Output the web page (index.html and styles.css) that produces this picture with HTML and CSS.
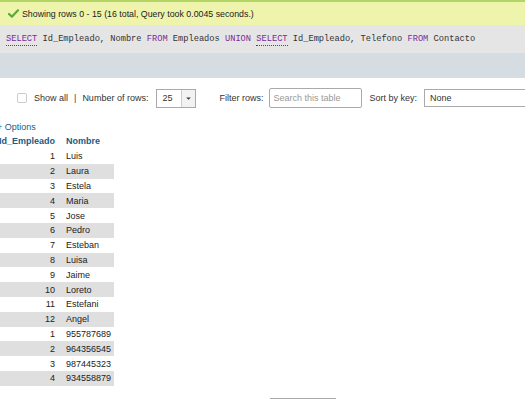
FILE: index.html
```html
<!DOCTYPE html>
<html>
<head>
<meta charset="utf-8">
<link rel="stylesheet" href="styles.css">
</head>
<body>
<div class="msg">
  <svg class="check" width="11" height="9" viewBox="0 0 12 10"><path d="M1 5.5 L4.2 8.5 L11 1.5" fill="none" stroke="#5aa83a" stroke-width="2.4" stroke-linecap="round" stroke-linejoin="round"/></svg>
  <span>Showing rows 0 - 15 (16 total, Query took 0.0045 seconds.)</span>
</div>
<div class="sql"><span class="kw u">SELECT</span> Id_Empleado, Nombre <span class="kw">FROM</span> Empleados <span class="kw">UNION</span> <span class="kw u">SELECT</span> Id_Empleado, Telefono <span class="kw">FROM</span> Contacto</div>
<div class="toolbar"></div>
<div class="controls">
  <span class="cb"></span>
  <span class="lbl">Show all</span>
  <span class="sep">|</span>
  <span class="lbl">Number of rows:</span>
  <span class="sel"><span class="selv">25</span><span class="arrow"><svg width="5" height="3" viewBox="0 0 6 4"><path d="M0 0.5 L6 0.5 L3 3.5 Z" fill="#333"/></svg></span></span>
  <span class="lbl filter">Filter rows:</span>
  <span class="search">Search this table</span>
  <span class="lbl">Sort by key:</span>
  <span class="sortsel">None</span>
</div>
<div class="results">
  <div class="options">+ Options</div>
  <table class="data">
    <thead><tr><th>Id_Empleado</th><th class="left">Nombre</th></tr></thead>
    <tbody>
      <tr><td class="num">1</td><td>Luis</td></tr>
      <tr><td class="num">2</td><td>Laura</td></tr>
      <tr><td class="num">3</td><td>Estela</td></tr>
      <tr><td class="num">4</td><td>Maria</td></tr>
      <tr><td class="num">5</td><td>Jose</td></tr>
      <tr><td class="num">6</td><td>Pedro</td></tr>
      <tr><td class="num">7</td><td>Esteban</td></tr>
      <tr><td class="num">8</td><td>Luisa</td></tr>
      <tr><td class="num">9</td><td>Jaime</td></tr>
      <tr><td class="num">10</td><td>Loreto</td></tr>
      <tr><td class="num">11</td><td>Estefani</td></tr>
      <tr><td class="num">12</td><td>Angel</td></tr>
      <tr><td class="num">1</td><td>955787689</td></tr>
      <tr><td class="num">2</td><td>964356545</td></tr>
      <tr><td class="num">3</td><td>987445323</td></tr>
      <tr><td class="num">4</td><td>934558879</td></tr>
    </tbody>
  </table>
  <div class="bottombox"></div>
</div>
</body>
</html>
```
FILE: styles.css
```css
html, body {
  margin: 0;
  padding: 0;
  background: #fff;
  overflow: hidden;
}
body {
  font-family: "Liberation Sans", Arial, sans-serif;
  font-size: 9px;
  color: #333;
  width: 525px;
  height: 400px;
  white-space: nowrap;
}
.msg {
  height: 25px;
  border-top: 2px solid #b3d667;
  background: #eef4ab;
  display: flex;
  align-items: center;
  padding-left: 8px;
  box-sizing: border-box;
  color: #222;
  font-size: 8.8px;
}
.check { margin-right: 3px; }
.sql {
  height: 28px;
  line-height: 28px;
  background: #e5e5e5;
  font-family: "Liberation Mono", "Courier New", monospace;
  font-size: 8.7px;
  color: #333;
  padding-left: 6px;
  white-space: pre;
}
.kw { color: #7a2b9a; }
.u { border-bottom: 1px dotted #7a2b9a; padding-bottom: 1px; }
.toolbar {
  height: 25px;
  background: #d5dde3;
}
.controls {
  display: flex;
  align-items: center;
  height: 40px;
  padding-left: 17px;
}
.controls > * { flex: none; }
.cb {
  width: 8px;
  height: 8px;
  border: 1px solid #ccc;
  border-radius: 2px;
  margin-right: 7px;
}
.lbl { color: #333; }
.sep { margin: 0 6px 0 6px; color: #444; }
.sel {
  margin-left: 8px;
  width: 40px;
  height: 19px;
  border: 1px solid #aaa;
  box-sizing: border-box;
  display: flex;
}
.selv { flex: 1; padding-left: 5px; line-height: 17px; }
.arrow {
  width: 13px;
  border-left: 1px solid #ccc;
  background: #f2f2f2;
  display: flex;
  align-items: center;
  justify-content: center;
}
.filter { margin-left: 23px; }
.search {
  margin-left: 6px;
  margin-right: 7px;
  width: 93px;
  height: 20px;
  border: 1px solid #aaa;
  border-radius: 2px;
  box-sizing: border-box;
  color: #999;
  padding-left: 3px;
  line-height: 18px;
}
.sortsel {
  margin-left: 7px;
  width: 110px;
  height: 18px;
  border: 1px solid #aaa;
  box-sizing: border-box;
  padding-left: 5px;
  line-height: 16px;
}
.results { margin-left: -6px; }
.options {
  color: #235a81;
  margin-left: 3px;
  margin-top: 2px;
  height: 14px;
  line-height: 14px;
}
.data {
  border-collapse: collapse;
  margin-top: 0;
}
.data th {
  color: #235a81;
  font-weight: bold;
  text-align: right;
  padding: 0 5px;
  height: 15px;
  line-height: 15px;
}
.data th.left { text-align: left; padding: 0 5px 0 6px; }
.data td {
  padding: 0 3px 0 6px;
  height: 14.8px;
  line-height: 14px;
  color: #222;
}
.data td.num { text-align: right; padding: 0 5px 0 5px; }
.data tbody tr:nth-child(even) { background: #dfdfdf; }
.bottombox {
  margin-left: 276px;
  margin-top: 12px;
  width: 66px;
  height: 10px;
  border-top: 1px solid #aaa;
}
```
